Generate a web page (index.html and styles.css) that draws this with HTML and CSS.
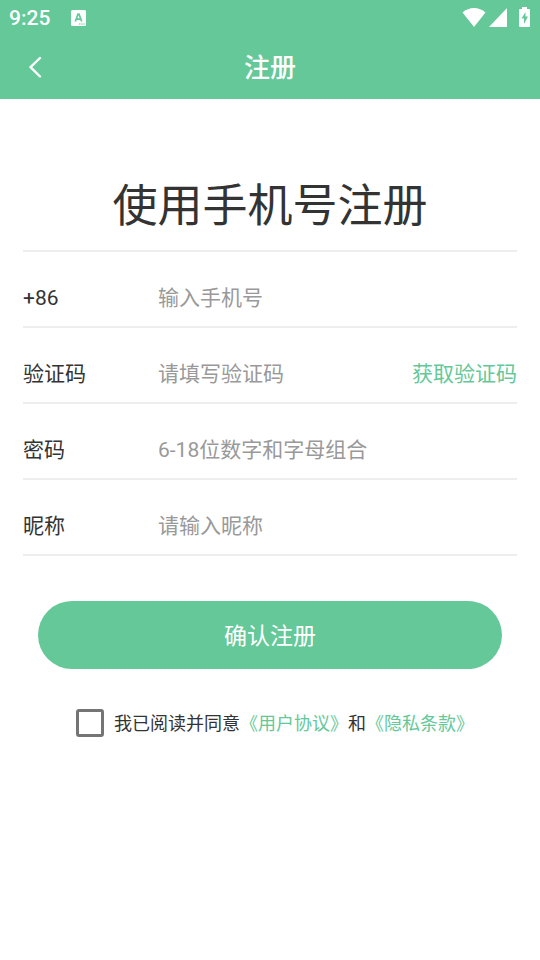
FILE: index.html
```html
<!DOCTYPE html>
<html lang="zh-CN">
<head>
<meta charset="utf-8">
<meta name="viewport" content="width=device-width, initial-scale=1">
<title>注册</title>
<link rel="stylesheet" href="styles.css">
</head>
<body>
<header class="top">
  <div class="status">
    <span class="time">9:25</span>
    <svg class="app-icon" width="15" height="16" viewBox="0 0 15 16" aria-hidden="true"><rect width="15" height="16" rx="1.500" fill="#fff"/><path d="M4.300 11.500 7 4.200h1l2.700 7.300M5.500 9.200h4" fill="none" stroke="#64c899" stroke-width="1.700"/><path d="M8 14h6" stroke="#64c899" stroke-width="1.200" stroke-dasharray="1.400 .8"/></svg>
    <span class="signals">
      <svg width="24" height="19" viewBox="0 0 24 19" aria-hidden="true"><path d="M12 19 .5 4.500Q5.500 0 12 0t11.500 4.500z" fill="#fff"/></svg>
      <svg width="18" height="19" viewBox="0 0 18 19" aria-hidden="true"><path d="M18 0v19H0z" fill="#fff"/></svg>
      <svg class="battery" width="11" height="20" viewBox="0 0 11 20" aria-hidden="true"><path d="M3 0h5v2h2q1 0 1 1v16q0 1-1 1H1q-1 0-1-1V3q0-1 1-1h2z" fill="#fff"/><path d="M6.500 5 2.500 11.500H5V17l4-7.500H6.500z" fill="#64c899"/></svg>
    </span>
  </div>
  <div class="nav">
    <button class="back" type="button" aria-label="返回"><svg width="14" height="22" viewBox="0 0 14 22" aria-hidden="true"><path d="M12 2 2.500 11.200 12 20.500" fill="none" stroke="#fff" stroke-width="2.400" stroke-linecap="round" stroke-linejoin="round"/></svg></button>
    <h1 class="nav-title">注册</h1>
  </div>
</header>
<main class="page">
  <h2 class="heading">使用手机号注册</h2>
  <form class="form">
    <div class="row"><label class="label" for="phone">+86</label><input class="field" id="phone" type="tel" placeholder="输入手机号"></div>
    <div class="row"><label class="label" for="code">验证码</label><input class="field" id="code" type="text" placeholder="请填写验证码"><button class="get-code" type="button">获取验证码</button></div>
    <div class="row"><label class="label" for="password">密码</label><input class="field" id="password" type="password" placeholder="6-18位数字和字母组合"></div>
    <div class="row"><label class="label" for="nickname">昵称</label><input class="field" id="nickname" type="text" placeholder="请输入昵称"></div>
    <button class="submit" type="submit">确认注册</button>
    <div class="agree">
      <input class="check" id="agree" type="checkbox">
      <span class="terms"><label for="agree">我已阅读并同意</label><a href="#terms">《用户协议》</a>和<a href="#privacy">《隐私条款》</a></span>
    </div>
  </form>
</main>
</body>
</html>
```
FILE: styles.css
```css
* {
  box-sizing: border-box;
}

body {
  margin: 0;
  background: #fff;
  color: #333;
  font-family: Roboto, "Noto Sans CJK SC", sans-serif;
  font-size: 21px;
  line-height: 24px;
}

button,
input {
  font: inherit;
}

button {
  border: 0;
  padding: 0;
  background: none;
  cursor: pointer;
}

svg {
  display: block;
}

.top {
  background: #64c899;
  color: #fff;
}

.status {
  display: flex;
  align-items: center;
  height: 36px;
  padding: 0 10px 0 9px;
}

.time {
  font-weight: 500;
}

.app-icon {
  margin-left: 21px;
}

.signals {
  display: flex;
  align-items: center;
  gap: 3px;
  margin-left: auto;
  padding-bottom: 2px;
}

.battery {
  margin-left: 9px;
}

.nav {
  display: grid;
  grid-template-columns: 70px 1fr 70px;
  align-items: center;
  height: 63px;
}

.back {
  display: grid;
  place-items: center;
  height: 62px;
  padding-bottom: 2px;
}

.nav-title {
  margin: 0;
  font-size: 26px;
  font-weight: 500;
  line-height: 36px;
  text-align: center;
}

.page {
  padding: 75px 23px 24px;
}

.heading {
  margin: 0;
  padding-bottom: 11px;
  border-bottom: 2px solid #eee;
  font-size: 45px;
  font-weight: 400;
  line-height: 65px;
  text-align: center;
}

.row {
  display: flex;
  align-items: center;
  height: 76px;
  padding-top: 18px;
  border-bottom: 2px solid #eee;
}

.label {
  flex: 0 0 135px;
}

.field {
  flex: 1;
  min-width: 0;
  height: 48px;
  border: 0;
  padding: 0;
  background: none;
  color: #333;
  outline: 0;
}

.field::placeholder {
  color: #999;
  opacity: 1;
}

.get-code {
  color: #64c899;
}

.submit {
  display: block;
  width: calc(100% - 30px);
  height: 68px;
  margin: 45px auto 40px;
  padding-top: 4px;
  border-radius: 34px;
  background: #64c899;
  color: #fff;
  font-size: 23px;
}

.agree {
  display: flex;
  align-items: center;
  justify-content: center;
  gap: 10px;
  padding-left: 10px;
  font-size: 18px;
}

.check {
  appearance: none;
  width: 28px;
  height: 28px;
  margin: 0;
  border: 3px solid #757575;
  border-radius: 3px;
}

.check:checked {
  border-color: #64c899;
  background: #64c899;
}

.terms {
  padding-top: 2px;
}

.terms a {
  color: #64c899;
  text-decoration: none;
}
```
